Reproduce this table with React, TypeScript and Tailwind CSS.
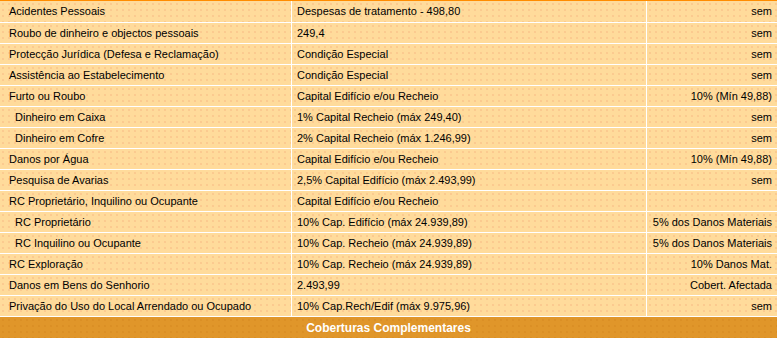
import React from 'react';

type Row = { name: string; value: string; note: string; sub?: boolean };

const rows: Row[] = [
  { name: 'Acidentes Pessoais', value: 'Despesas de tratamento - 498,80', note: 'sem' },
  { name: 'Roubo de dinheiro e objectos pessoais', value: '249,4', note: 'sem' },
  { name: 'Protecção Jurídica (Defesa e Reclamação)', value: 'Condição Especial', note: 'sem' },
  { name: 'Assistência ao Estabelecimento', value: 'Condição Especial', note: 'sem' },
  { name: 'Furto ou Roubo', value: 'Capital Edifício e/ou Recheio', note: '10% (Mín 49,88)' },
  { name: 'Dinheiro em Caixa', value: '1% Capital Recheio (máx 249,40)', note: 'sem', sub: true },
  { name: 'Dinheiro em Cofre', value: '2% Capital Recheio (máx 1.246,99)', note: 'sem', sub: true },
  { name: 'Danos por Água', value: 'Capital Edifício e/ou Recheio', note: '10% (Mín 49,88)' },
  { name: 'Pesquisa de Avarias', value: '2,5% Capital Edifício (máx 2.493,99)', note: 'sem' },
  { name: 'RC Proprietário, Inquilino ou Ocupante', value: 'Capital Edifício e/ou Recheio', note: '' },
  { name: 'RC Proprietário', value: '10% Cap. Edifício (máx 24.939,89)', note: '5% dos Danos Materiais', sub: true },
  { name: 'RC Inquilino ou Ocupante', value: '10% Cap. Recheio (máx 24.939,89)', note: '5% dos Danos Materiais', sub: true },
  { name: 'RC Exploração', value: '10% Cap. Recheio (máx 24.939,89)', note: '10% Danos Mat.' },
  { name: 'Danos em Bens do Senhorio', value: '2.493,99', note: 'Cobert. Afectada' },
  { name: 'Privação do Uso do Local Arrendado ou Ocupado', value: '10% Cap.Rech/Edif (máx 9.975,96)', note: 'sem' },
];

// light orange cell with a faint dotted texture
const cell =
  'bg-[#ffdb9b] bg-[radial-gradient(circle,#fac58c_0.6px,transparent_1px)] bg-[length:6px_6px] flex items-center';

export default function App() {
  return (
    <div className="w-[779px] h-[338px] bg-white overflow-hidden font-['Liberation_Sans',Arial,sans-serif] text-[11px] text-black">
      <div className="w-[777px] flex flex-col gap-px">
        <div className="h-px bg-[#ff8c00] -mb-px" />
        {rows.map((r, i) => (
          <div key={i} className={`flex gap-px ${i === 0 ? 'h-[21px]' : 'h-[20px]'}`}>
            <div className={`${cell} w-[291px] ${r.sub ? 'pl-[15px]' : 'pl-[9px]'}`}>{r.name}</div>
            <div className={`${cell} w-[354px] pl-[5px]`}>{r.value}</div>
            <div className={`${cell} flex-1 justify-end pr-[5px]`}>{r.note}</div>
          </div>
        ))}
        <div className="h-[21px] bg-[#e0962a] bg-[radial-gradient(circle,#d98d24_0.6px,transparent_1px)] bg-[length:6px_6px] flex items-center justify-center text-white font-bold text-[12px]">
          Coberturas Complementares
        </div>
      </div>
    </div>
  );
}
